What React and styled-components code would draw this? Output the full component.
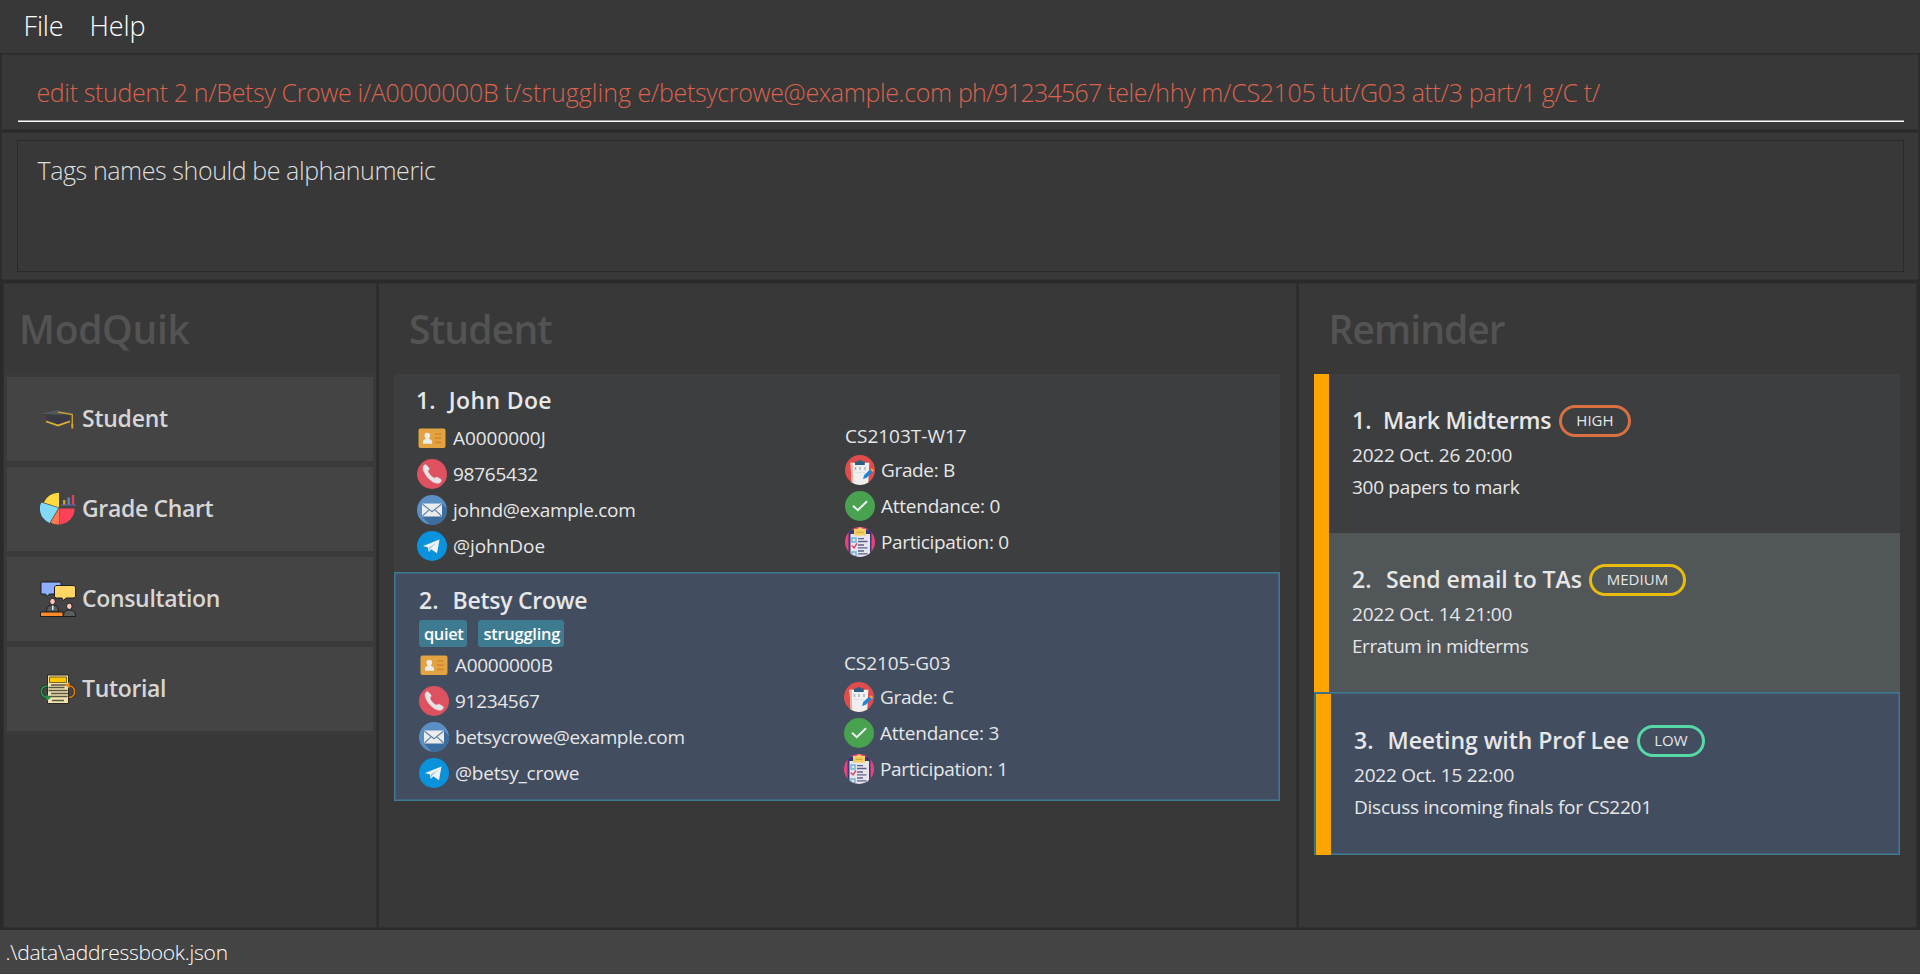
import React from 'react';
import styled, { createGlobalStyle, css } from 'styled-components';

const c = {
  bg: '#383838',
  line: '#2a2a2a',
  soft: '#303030',
  bar: '#444444',
  card: '#3c3e3f',
  cardAlt: '#515658',
  selected: '#424d5f',
  accent: '#3e7b91',
  text: '#e6e7e8',
};

const GlobalStyle = createGlobalStyle`
  * { box-sizing: border-box; }
  body {
    margin: 0;
    background: ${c.bg};
    font-family: 'Open Sans', 'Noto Sans', sans-serif;
    color: ${c.text};
  }
`;

const Window = styled.div`
  width: 1920px;
  height: 974px;
  display: flex;
  flex-direction: column;
  overflow: hidden;
  background: ${c.bg};
`;

/* Text with its own tracking */
const Label = styled.span`
  letter-spacing: ${(p) => p.$track || 0}px;
  white-space: pre;
`;

const MenuBar = styled.nav`
  flex: none;
  height: 53px;
  display: flex;
  gap: 26px;
  padding-left: 23.5px;
  font-size: 27px;
  font-weight: 300;
  line-height: 51px;
  color: #fff;
`;

const Pane = styled.section`
  flex: none;
  border: 1px solid ${c.line};
  box-shadow: inset 0 0 0 1px ${c.soft};
`;

const CommandPane = styled(Pane)`
  height: 78px;
  padding: 8px 15px 8px 17px;
`;

const CommandInput = styled.div`
  height: 60px;
  border-bottom: 1px solid #fff;
  box-shadow: inset 0 -1px 0 #9b9b9b;
  padding-left: 18.5px;
  font-size: 25px;
  font-weight: 300;
  line-height: 60px;
  color: #d9634e;
`;

const ResultPane = styled(Pane)`
  height: 150px;
  padding: 8px 15px 8px 16px;
`;

const ResultBox = styled.div`
  height: 132px;
  border: 1px solid ${c.line};
  padding: 10px 0 0 19.5px;
  font-size: 25px;
  font-weight: 300;
  line-height: 38px;
  color: #dedede;
`;

const Main = styled.main`
  flex: none;
  height: 649px;
  display: grid;
  grid-template-columns: 372px 917px 617px;
  gap: 3px;
  padding: 3px 4px;
  background: ${c.line};
`;

const Column = styled.section`
  background: ${c.bg};
  box-shadow: 0 0 0 1px ${c.soft};
`;

const Heading = styled.h1`
  margin: 0;
  padding-left: ${(p) => p.$indent}px;
  font-size: 39px;
  font-weight: 600;
  line-height: 90px;
  color: #535353;
`;

const NavList = styled.div`
  display: flex;
  flex-direction: column;
  gap: 6px;
  padding: 3px;
  background: #3a3a3a;
`;

const NavItem = styled.div`
  height: 84px;
  display: flex;
  align-items: center;
  gap: 6px;
  padding-left: 33px;
  background: ${c.bar};
  font-size: 23px;
  font-weight: 600;
  color: #d6d6d6;
  svg { width: 36px; height: 36px; }
  span { padding-bottom: 2px; }
`;

const List = styled.div`
  padding: 0 16px 0 15px;
`;

const selectedFrame = css`
  background: ${c.selected};
  box-shadow: inset 0 0 0 1px ${c.accent}, inset 0 0 0 2px #40647a;
`;

const StudentCard = styled.article`
  height: 198px;
  padding: 8px 7px 0 23px;
  background: ${c.card};
  ${(p) =>
    p.$selected &&
    css`
      height: 229px;
      padding: 10px 11px 0 25px;
      ${selectedFrame}
    `}
`;

const Name = styled.h2`
  margin: 0;
  display: flex;
  font-size: 23px;
  font-weight: 600;
  line-height: 36px;
`;

const Index = styled.span`
  width: ${(p) => p.$width || 33}px;
`;

const StudentIndex = styled(Index)`
  width: ${(p) => p.$width}px;
  margin-left: ${(p) => p.$shift}px;
`;

const Tags = styled.div`
  display: flex;
  gap: 11px;
  margin: 2px 0 -2px;
`;

const Tag = styled.span`
  height: 27px;
  padding: 0 4px 0 5px;
  border-radius: 3px;
  background: ${c.accent};
  font-size: 16.5px;
  font-weight: 600;
  line-height: 27px;
  color: #fff;
`;

const Details = styled.div`
  display: grid;
  grid-template-columns: 1fr 1fr;
  align-items: start;
  margin-top: 4px;
  font-size: 19px;
`;

const Facts = styled.div`
  display: flex;
  flex-direction: column;
  gap: 6px;
  padding-top: ${(p) => p.$top || 0}px;
`;

const Fact = styled.div`
  height: 30px;
  display: flex;
  align-items: center;
  gap: 6px;
  line-height: 30px;
  svg { width: 30px; height: 30px; flex: none; }
`;

const Module = styled.div`
  height: 28px;
  margin-bottom: -1px;
  line-height: 28px;
`;

const ReminderCard = styled.article`
  height: 159px;
  display: flex;
  background: ${(p) => (p.$alt ? c.cardAlt : c.card)};
  ${(p) =>
    p.$selected &&
    css`
      height: 163px;
      padding: 2px 0 0 2px;
      ${selectedFrame}
    `}
`;

const Stripe = styled.div`
  width: 15px;
  background: #ffa500;
`;

const ReminderBody = styled.div`
  padding: 31px 0 0 23px;
  font-size: 19px;
  line-height: 32px;
`;

const ReminderTitle = styled(Name)`
  height: 32px;
  margin-bottom: 2px;
  line-height: 31px;
`;

const Pill = styled.span`
  height: 32px;
  margin-left: 7.5px;
  padding: 0 14.5px;
  border: 3px solid ${(p) => p.$color};
  border-radius: 16px;
  font-size: 15px;
  font-weight: 400;
  line-height: 25px;
`;

const StatusBar = styled.footer`
  flex: none;
  height: 44px;
  padding: 0 0 0 5.5px;
  background: ${c.bar};
  border-bottom: 1px solid #3e3e3e;
  font-size: 21px;
  font-weight: 300;
  line-height: 45px;
  color: #fff;
`;

const CapIcon = () => (
  <svg viewBox="0 0 36 36">
    <path d="M6 14.500v6l12 4.500 12-4.500v-6z" fill="#3b3746" />
    <path d="M6 19.500v1.700l12 4.300 12-4.300v-1.700l-12 4z" fill="#d8b337" />
    <path d="M0 12.700 17 9l19 3.600L18 17.500z" fill="#373c3f" />
    <path d="M0 12.700 17 9l19 3.600-18 1.200z" fill="#50585b" />
    <path d="M18 11.200 32.300 13.500V26" fill="none" stroke="#d3a02a" strokeWidth="1.300" />
    <path d="M31.300 22.500h2v5h-2z" fill="#d3a02a" />
  </svg>
);

const PieIcon = () => (
  <svg viewBox="0 0 36 36">
    <path d="M19 16.500 3.800 11.500A16 16 0 0 1 19 1.700z" fill="#ffd93f" />
    <path d="M18.500 17 1.500 11.500Q-1 15 .4 21.500T9.500 32z" fill="#7fd9f7" />
    <path d="M19 17.500v16a15 15 0 0 1-8.500-2z" fill="#ff7850" />
    <path d="M19.300 17.500H34.500A15.500 15.500 0 0 1 19.300 33.400z" fill="#ff4259" />
    <path d="M21 14h15" stroke="#545c8a" strokeWidth="1.800" />
    <path d="M24.200 9v4.500" stroke="#d6a531" strokeWidth="2.200" />
    <path d="M28.700 6.500v7" stroke="#5b85c4" strokeWidth="2.400" />
    <path d="M33 4v9.500" stroke="#e03f57" strokeWidth="2.400" />
  </svg>
);

const ConsultIcon = () => (
  <svg viewBox="0 0 36 36" stroke="#1d1d1f" strokeWidth="1">
    <path d="M1 1h20v12H9.500L7 15.500 5.500 13H1z" fill="#8eafff" />
    <path d="M16 4.500h18l1.500 1.500v9.500L34 17h-8l-2.500 2.500L22 17h-6l-1.500-1.500V6z" fill="#ffd564" />
    <path d="M6.500 31c0-5 2-7 6-7s6 2 6 7z" fill="#55585c" />
    <path d="M12 24.500h1.500V29H12z" fill="#e8e8e8" stroke="none" />
    <ellipse cx="12.500" cy="20.500" rx="2.800" ry="3.200" fill="#ffc6ba" />
    <path d="M.5 31h22.500v4.500H.5z" fill="#ff8b28" />
    <path d="M23.500 35.500c0-4.500 2-6.500 6-6.500s6 2 6 6.500z" fill="#5c5c5e" />
    <ellipse cx="29.300" cy="25.300" rx="2.800" ry="3.200" fill="#ffc6ba" />
  </svg>
);

const TutorialIcon = () => (
  <svg viewBox="0 0 36 36">
    <path d="M7.500 4h21v28.500h-21z" fill="#f1e2b0" stroke="#2c2a24" strokeWidth="1" />
    <path d="M9.500 6h17v5.500h-17z" fill="#ffc700" stroke="#5d4a10" strokeWidth=".8" />
    <path d="M11 14h17M8.500 16.500h16M8.500 19.500h19M11 22.500h17M8.500 25.500h19M12 29.500h12" stroke="#5a5443" strokeWidth="1.300" />
    <path d="M7.500 15Q1.300 15.500 1.300 20.500T8 27" fill="none" stroke="#26352b" strokeWidth="3" />
    <path d="M7.500 15Q1.300 15.500 1.300 20.500T8 27" fill="none" stroke="#1f9a52" strokeWidth="1.600" />
    <path d="M6.500 23.500 11 27l-4.500 2.800z" fill="#1f9a52" />
    <path d="M28 14.500q6.500.500 6.500 6T29 26.500" fill="none" stroke="#3b2d1c" strokeWidth="3" />
    <path d="M28 14.500q6.500.500 6.500 6T29 26.500" fill="none" stroke="#e07b12" strokeWidth="1.600" />
    <path d="M29.500 11 25 14.300l4.500 3.200z" fill="#f08a14" />
  </svg>
);

const IdIcon = () => (
  <svg viewBox="0 0 30 30">
    <rect x="1.500" y="5.500" width="27" height="19.500" rx="2" fill="#e2a340" />
    <path d="M6 20.700v-2c0-1.800 1.500-2.300 3-2.900C7.800 14.500 7.300 13.300 7.500 12c.2-1.500 1.400-2.200 2.800-2.200s2.600.7 2.800 2.200c.2 1.300-.3 2.500-1.400 3.800 1.600.6 3.300 1.100 3.300 2.900v2z" fill="#ececec" />
    <path d="M18 11h6.500M18 15.200h6.500M18 19.400h6.500" stroke="#d98530" strokeWidth="1.700" />
  </svg>
);

const PhoneIcon = () => (
  <svg viewBox="0 0 30 30">
    <circle cx="15" cy="15" r="15" fill="#dd5160" />
    <path d="M6.300 7.200C7 6 8.500 5.300 9.300 5.900l2.700 3.200c.5 1-.2 1.900-1.200 2.900 1 2.800 3.300 5.600 6.600 7.200 1-1 2-1.300 3-.9l3.600 2.100c.8.8 0 2.600-1.500 3.500-2.300 1.300-6.600-.4-10.300-3.900S5 10.300 6.300 7.200z" fill="#e6e4e4" stroke="#e6e4e4" strokeWidth=".5" />
  </svg>
);

const MailIcon = () => (
  <svg viewBox="0 0 30 30">
    <circle cx="15" cy="15" r="15" fill="#5b8ec4" />
    <path d="M25.300 9 30 13.700A15 15 0 0 1 13 29.800L5 21.500z" fill="#3d6c9f" />
    <rect x="5" y="8.600" width="20" height="13" rx="1" fill="#ececec" />
    <path d="M5.500 9.200 15 16.700l9.500-7.500M5.500 21l6.700-6.400M24.500 21l-6.700-6.400" fill="none" stroke="#5a82ab" strokeWidth="1.100" />
  </svg>
);

const TelegramIcon = () => (
  <svg viewBox="0 0 30 30">
    <circle cx="15" cy="15" r="15" fill="#0a93dc" />
    <path d="M6 15 22.500 8.500 20 22.300l-5.700-4-2.600 2.700-.7-4.600z" fill="#f1f3f4" />
    <path d="M20 11.200 12 16.500l-.3 4 1.500-3.300z" fill="#7fbfe3" />
  </svg>
);

const GradeIcon = () => (
  <svg viewBox="0 0 30 30">
    <circle cx="15" cy="15" r="15" fill="#df4c4e" />
    <path d="M5.500 7.800h18.800l-1 19.700A15 15 0 0 1 6.700 27.500z" fill="#efefef" />
    <path d="M5.500 7.800h2.200l.5 20.500-1.500-.8z" fill="#e9b59a" />
    <path d="M10 6.500h2Q15 3.500 18 6.500h1.800V10H10z" fill="#2f5f80" />
    <path d="M10.500 12v3M15 12v3M20 12v3" stroke="#9cb3c4" strokeWidth="1.400" />
    <path d="M10 17.500h10" stroke="#dde1e4" strokeWidth="1" />
    <path d="m18 24 1.200-4 6-5.500 2.500 2.600-6 5.700z" fill="#1f84d2" />
    <path d="m25.200 14.500 1.600-1.300 2.300 2.400-1.500 1.500z" fill="#f0a63c" />
  </svg>
);

const CheckIcon = () => (
  <svg viewBox="0 0 30 30">
    <circle cx="15" cy="15" r="15" fill="#49a24f" />
    <path d="m8 14.700 4.800 4.600 9.200-9" fill="none" stroke="#f0f3f0" strokeWidth="1.900" />
  </svg>
);

const ParticipationIcon = ({ id }) => (
  <svg viewBox="0 0 30 30">
    <defs>
      <clipPath id={id}>
        <circle cx="15" cy="15" r="15" />
      </clipPath>
    </defs>
    <g clipPath={`url(#${id})`}>
      <path d="M0 0h30v30H0z" fill="#e8437f" />
      <path d="M3.500 2.500h23V30h-23z" fill="#363a72" />
      <path d="M5.500 7h19.500v23H5.500z" fill="#e6e6ea" />
      <path d="M9 2h3.500Q15-1.500 18 2h3v6.500H9z" fill="#f2cd62" />
      <path d="M11.500 5.200h7" stroke="#d19e3a" strokeWidth="1.100" />
      <path d="M7 11h4v4H7zM7 25h4v4H7z" fill="none" stroke="#6fb2d8" strokeWidth="1.400" />
      <path d="m6.800 18.500 2.200 2.300 3-4.500" fill="none" stroke="#e0426f" strokeWidth="1.500" />
      <path d="M13 11.700h6M13 14.500h9.500M13 18h6M13 20.800h9.500M13 24h6M13 26.800h9.500" stroke="#5c5f90" strokeWidth="1.300" />
    </g>
  </svg>
);

const command = [
  ['edit student 2 n/Betsy Crowe i/A0000000B ', -0.37],
  ['t/struggling ', 0.02],
  ['e/betsycrowe@example.com ', -0.36],
  ['ph/91234567 ', -0.8],
  ['tele/hhy m/CS2105 tut/G03 att/3 part/1 g/C t/', -0.36],
];

const navItems = [
  { label: 'Student', Icon: CapIcon, track: -0.25 },
  { label: 'Grade Chart', Icon: PieIcon, track: -0.35 },
  { label: 'Consultation', Icon: ConsultIcon, track: -0.33 },
  { label: 'Tutorial', Icon: TutorialIcon, track: -0.33 },
];

const students = [
  {
    name: ['John Doe', 0.35],
    indexShift: -1,
    indexWidth: 32.8,
    tags: [],
    contact: [
      [IdIcon, 'A0000000J', -0.05],
      [PhoneIcon, '98765432', -0.25],
      [MailIcon, 'johnd@example.com', -0.27],
      [TelegramIcon, '@johnDoe', -0.05],
    ],
    module: ['CS2103T-W17', 0],
    record: [
      [GradeIcon, 'Grade: B', -0.35],
      [CheckIcon, 'Attendance: 0', -0.25],
      [ParticipationIcon, 'Participation: 0', -0.32],
    ],
  },
  {
    name: ['Betsy Crowe', -0.25],
    indexShift: 0,
    indexWidth: 33.500,
    selected: true,
    tags: [['quiet', -0.4], ['struggling', -0.25]],
    contact: [
      [IdIcon, 'A0000000B', -0.3],
      [PhoneIcon, '91234567', -0.3],
      [MailIcon, 'betsycrowe@example.com', -0.35],
      [TelegramIcon, '@betsy_crowe', -0.2],
    ],
    module: ['CS2105-G03', -0.1],
    record: [
      [GradeIcon, 'Grade: C', -0.35],
      [CheckIcon, 'Attendance: 3', -0.25],
      [ParticipationIcon, 'Participation: 1', -0.32],
    ],
  },
];

const reminders = [
  {
    title: ['Mark Midterms', -0.2],
    indexWidth: 31,
    level: 'HIGH',
    color: '#d97042',
    date: ['2022 Oct. 26 20:00', -0.22],
    note: ['300 papers to mark', -0.3],
  },
  {
    title: ['Send email to TAs', -0.05],
    indexWidth: 34,
    level: 'MEDIUM',
    color: '#e8bd0d',
    alt: true,
    date: ['2022 Oct. 14 21:00', -0.22],
    note: ['Erratum in midterms', -0.45],
  },
  {
    title: ['Meeting with Prof Lee', -0.05],
    indexWidth: 33.500,
    level: 'LOW',
    color: '#56d9a6',
    selected: true,
    date: ['2022 Oct. 15 22:00', -0.22],
    note: ['Discuss incoming finals for CS2201', -0.25],
  },
];

const FactRow = ({ fact: [Icon, text, track], id }) => (
  <Fact>
    <Icon id={id} />
    <Label $track={track}>{text}</Label>
  </Fact>
);

const Student = ({ student, number }) => (
  <StudentCard $selected={student.selected}>
    <Name>
      <StudentIndex $width={student.indexWidth} $shift={student.indexShift}>
        {number}.
      </StudentIndex>
      <Label $track={student.name[1]}>{student.name[0]}</Label>
    </Name>
    {student.tags.length > 0 && (
      <Tags>
        {student.tags.map(([text, track]) => (
          <Tag key={text}>
            <Label $track={track}>{text}</Label>
          </Tag>
        ))}
      </Tags>
    )}
    <Details>
      <Facts $top={1}>
        {student.contact.map((fact) => (
          <FactRow key={fact[1]} fact={fact} />
        ))}
      </Facts>
      <Facts>
        <Module>
          <Label $track={student.module[1]}>{student.module[0]}</Label>
        </Module>
        {student.record.map((fact) => (
          <FactRow key={fact[1]} fact={fact} id={`record-${number}`} />
        ))}
      </Facts>
    </Details>
  </StudentCard>
);

const Reminder = ({ reminder, number }) => (
  <ReminderCard $alt={reminder.alt} $selected={reminder.selected}>
    <Stripe />
    <ReminderBody>
      <ReminderTitle>
        <Index $width={reminder.indexWidth}>{number}.</Index>
        <Label $track={reminder.title[1]}>{reminder.title[0]}</Label>
        <Pill $color={reminder.color}>{reminder.level}</Pill>
      </ReminderTitle>
      <div>
        <Label $track={reminder.date[1]}>{reminder.date[0]}</Label>
      </div>
      <div>
        <Label $track={reminder.note[1]}>{reminder.note[0]}</Label>
      </div>
    </ReminderBody>
  </ReminderCard>
);

export default function App() {
  return (
    <Window>
      <GlobalStyle />
      <MenuBar>
        <Label $track={-0.15}>File</Label>
        <Label $track={-0.15}>Help</Label>
      </MenuBar>
      <CommandPane>
        <CommandInput>
          {command.map(([text, track]) => (
            <Label key={text} $track={track}>
              {text}
            </Label>
          ))}
        </CommandInput>
      </CommandPane>
      <ResultPane>
        <ResultBox>
          <Label $track={-0.42}>Tags names should be alphanumeric</Label>
        </ResultBox>
      </ResultPane>
      <Main>
        <Column>
          <Heading $indent={15}>
            <Label $track={-0.3}>ModQuik</Label>
          </Heading>
          <NavList>
            {navItems.map(({ label, Icon, track }) => (
              <NavItem key={label}>
                <Icon />
                <Label $track={track}>{label}</Label>
              </NavItem>
            ))}
          </NavList>
        </Column>
        <Column>
          <Heading $indent={30}>
            <Label $track={-0.8}>Student</Label>
          </Heading>
          <List>
            {students.map((student, i) => (
              <Student key={student.name[0]} student={student} number={i + 1} />
            ))}
          </List>
        </Column>
        <Column>
          <Heading $indent={29.5}>
            <Label $track={-0.95}>Reminder</Label>
          </Heading>
          <List>
            {reminders.map((reminder, i) => (
              <Reminder key={reminder.level} reminder={reminder} number={i + 1} />
            ))}
          </List>
        </Column>
      </Main>
      <StatusBar>
        <Label $track={-0.25}>.\data\addressbook.json</Label>
      </StatusBar>
    </Window>
  );
}
